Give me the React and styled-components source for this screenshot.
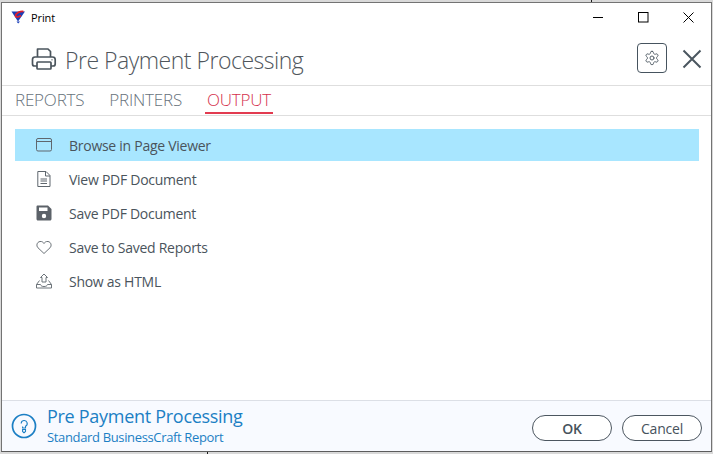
import React from "react";
import styled, { createGlobalStyle } from "styled-components";

const Global = createGlobalStyle`
  html, body { margin: 0; padding: 0; background: #d9d9d9; }
  body { font-family: "Open Sans", "Noto Sans", sans-serif; }
`;

const Page = styled.div`
  width: 713px;
  height: 454px;
  box-sizing: border-box;
  padding: 2px 1px;
  background:
    linear-gradient(#1a1a1a, #1a1a1a) 591px 0 / 1px 2px no-repeat,
    linear-gradient(#1a1a1a, #1a1a1a) 207px 452px / 1px 2px no-repeat,
    #d9d9d9;
  overflow: hidden;
`;

const Window = styled.div`
  height: 100%;
  box-sizing: border-box;
  display: flex;
  flex-direction: column;
  background: #fff;
  border: 1px solid #737373;
  border-bottom-color: #5c5c5c;
`;

const TitleBar = styled.div`
  height: 29px;
  display: flex;
  align-items: center;
  padding-left: 9px;
  flex: none;
`;

const TitleText = styled.span`
  font-size: 11px;
  color: #000;
  margin-left: 5px;
  flex: 1;
  letter-spacing: -0.1px;
`;

const WinButton = styled.button`
  width: 45px;
  height: 29px;
  border: 0;
  padding: 0;
  background: none;
  display: flex;
  align-items: center;
  justify-content: center;
`;

const Header = styled.header`
  height: 53px;
  flex: none;
  display: flex;
  align-items: center;
  padding: 0 9px 0 29px;
  border-bottom: 1px solid #dedede;
`;

const Heading = styled.h1`
  flex: 1;
  margin: 0 0 0 8px;
  font-size: 23px;
  font-weight: 300;
  color: #4f565c;
  letter-spacing: -0.49px;
  position: relative;
  top: 1px;
`;

const SettingsButton = styled.button`
  width: 30px;
  height: 30px;
  padding: 0;
  margin: 0 15px 2px 0;
  box-sizing: border-box;
  border: 1px solid #46545f;
  border-radius: 4px;
  background: #fff;
  display: flex;
  align-items: center;
  justify-content: center;
`;

const CloseButton = styled.button`
  width: 20px;
  height: 20px;
  border: 0;
  padding: 0;
  background: none;
  display: flex;
  align-items: center;
  justify-content: center;
`;

const Tabs = styled.nav`
  height: 29px;
  flex: none;
  display: flex;
  gap: 21px;
  padding-left: 11px;
  border-bottom: 1px solid #dedede;
`;

const Tab = styled.div`
  height: 28px;
  box-sizing: border-box;
  padding: 3px 2px 0;
  font-size: 17px;
  font-weight: 300;
  letter-spacing: -0.2px;
  line-height: 22px;
  color: ${(p) => (p.$active ? "#d5304c" : "#67727b")};
  border-bottom: ${(p) => (p.$active ? "2px solid #e23b50" : "2px solid transparent")};
`;

const List = styled.ul`
  flex: 1;
  margin: 0;
  padding: 13px 12px 0 13px;
  list-style: none;
  display: flex;
  flex-direction: column;
  gap: 2px;
`;

const Row = styled.li`
  height: 32px;
  display: flex;
  align-items: center;
  background: ${(p) => (p.$selected ? "#a8e6ff" : "transparent")};
  font-size: 14px;
  letter-spacing: -0.27px;
  color: #4a545c;
`;

const RowIcon = styled.span`
  width: 54px;
  padding-left: 21px;
  box-sizing: border-box;
  display: flex;
  align-items: center;
  flex: none;
`;

const Footer = styled.footer`
  height: 50px;
  flex: none;
  display: flex;
  align-items: center;
  padding: 0 9px;
  background: #f8faff;
  border-top: 1px solid #dcdfe6;
`;

const HelpIcon = styled.span`
  width: 26px;
  height: 26px;
  display: flex;
  margin-right: 10px;
  flex: none;
`;

const FooterText = styled.div`
  flex: 1;
  display: flex;
  flex-direction: column;
  gap: 2px;
  padding-bottom: 1px;
  color: #1c7fc4;
`;

const FooterTitle = styled.div`
  font-size: 18px;
  line-height: 22px;
  letter-spacing: -0.29px;
`;

const FooterSub = styled.div`
  font-size: 13px;
  line-height: 17px;
  letter-spacing: -0.35px;
`;

const DialogButton = styled.button`
  width: 80px;
  height: 26px;
  margin-left: 10px;
  box-sizing: border-box;
  border: 1px solid #4c5660;
  border-radius: 13px;
  background: #fff;
  color: #46525c;
  font-family: inherit;
  font-size: 14px;
  font-weight: ${(p) => (p.$primary ? 600 : 400)};
  letter-spacing: -0.2px;
  padding: 0;
  position: relative;
  top: 2px;
`;

const Logo = () => (
  <svg width="15" height="15" viewBox="0 0 15 15">
    <path d="M0.5 1.5H14L7 11.5Z" fill="#1a3fb8" />
    <path d="M5.5 11.5H9L7.2 13.5Z" fill="#1a3fb8" />
    <path d="M12.5 1.5C9 1 5 3 4.5 5.5C4.2 7.5 7 7.5 10 5.5" fill="none" stroke="#e0202c" strokeWidth="1.7" />
  </svg>
);

const PrinterIcon = () => (
  <svg width="26" height="26" viewBox="0 0 26 26" fill="none" stroke="#4a545c" strokeWidth="1.7" strokeLinejoin="round">
    <path d="M6.5 11V3H17L19.5 5.5V11" />
    <path d="M6 20H3.5C2.3 20 1.5 19.2 1.5 18V13.5C1.5 12 2.5 11 4 11H21.5C23 11 24.2 12 24.2 13.5V18C24.2 19.2 23.4 20 22.2 20H20" />
    <rect x="6" y="16" width="14" height="7" rx="0.8" />
    <path d="M21 13.6V14.2" />
  </svg>
);

const GearIcon = () => (
  <svg width="16" height="16" viewBox="0 0 24 24" fill="none" stroke="#56616a" strokeWidth="1.5" strokeLinecap="round" strokeLinejoin="round">
    <path d="M12.22 2h-.44a2 2 0 0 0-2 2v.18a2 2 0 0 1-1 1.73l-.43.25a2 2 0 0 1-2 0l-.15-.08a2 2 0 0 0-2.73.73l-.22.38a2 2 0 0 0 .73 2.73l.15.1a2 2 0 0 1 1 1.72v.51a2 2 0 0 1-1 1.74l-.15.09a2 2 0 0 0-.73 2.73l.22.38a2 2 0 0 0 2.73.73l.15-.08a2 2 0 0 1 2 0l.43.25a2 2 0 0 1 1 1.73V20a2 2 0 0 0 2 2h.44a2 2 0 0 0 2-2v-.18a2 2 0 0 1 1-1.73l.43-.25a2 2 0 0 1 2 0l.15.08a2 2 0 0 0 2.73-.73l.22-.39a2 2 0 0 0-.73-2.73l-.15-.08a2 2 0 0 1-1-1.74v-.5a2 2 0 0 1 1-1.74l.15-.09a2 2 0 0 0 .73-2.73l-.22-.38a2 2 0 0 0-2.73-.73l-.15.08a2 2 0 0 1-2 0l-.43-.25a2 2 0 0 1-1-1.73V4a2 2 0 0 0-2-2z" />
    <circle cx="12" cy="12" r="3" />
  </svg>
);

const BigClose = () => (
  <svg width="20" height="20" viewBox="0 0 20 20" stroke="#4a565f" strokeWidth="2" fill="none">
    <path d="M1.5 1.5L18.5 18.5M18.5 1.5L1.5 18.5" />
  </svg>
);

const BrowseIcon = () => (
  <svg width="16" height="14" viewBox="0 0 16 14" fill="none" stroke="#5f676e" strokeWidth="1">
    <rect x="0.5" y="0.5" width="15" height="12.5" rx="1.5" />
    <path d="M0.5 3.5H15.5" />
  </svg>
);

const DocIcon = () => (
  <svg width="16" height="16" viewBox="0 0 16 16" fill="none" stroke="#5f676e" strokeWidth="1">
    <path d="M1.8 0.5H10L14 4.5V15.5H1.8Z" strokeLinejoin="round" />
    <path d="M9.5 0.5V5H14M4.5 8H11M4.5 10H11M4.5 12.5H11" />
  </svg>
);

const SaveIcon = () => (
  <svg width="16" height="16" viewBox="0 0 16 16">
    <path fillRule="evenodd" fill="#5c6269" d="M1.5 0.5H12L15.5 4V14C15.5 14.9 14.9 15.5 14 15.5H2C1 15.5 0.5 14.9 0.5 14V1.5C0.5 1 1 0.5 1.5 0.5ZM3 2.5V6H11.5V2.5ZM8 8.8A2.2 2.2 0 1 0 8 13.2A2.2 2.2 0 1 0 8 8.8Z" />
  </svg>
);

const HeartIcon = () => (
  <svg width="16" height="15" viewBox="0 0 16 15" fill="none" stroke="#6d747a" strokeWidth="1">
    <path d="M8 13.5L2 7.8C0 5.8 0.8 2 4 1.5C6 1.2 7.3 2.3 8 3.5C8.7 2.3 10 1.2 12 1.5C15.2 2 16 5.8 14 7.8Z" strokeLinejoin="round" />
  </svg>
);

const UploadIcon = () => (
  <svg width="16" height="16" viewBox="0 0 16 16" fill="none" stroke="#6d747a" strokeWidth="1">
    <path d="M8 1L4.5 4.5H6V9H10V4.5H11.5Z" strokeLinejoin="round" />
    <path d="M3.5 7.5L0.5 11.5V15H15.5V11.5L12.5 7.5M0.5 11.5H4.5C5 13 6 13.5 8 13.5C10 13.5 11 13 11.5 11.5H15.5" strokeLinejoin="round" />
  </svg>
);

const HelpGlyph = () => (
  <svg width="26" height="26" viewBox="0 0 26 26" fill="none" stroke="#1c7fc4">
    <circle cx="13" cy="13" r="11.5" strokeWidth="1.7" />
    <path d="M10.2 10.5A3 3 0 1 1 14.5 13.2V15H11.6V13.4" strokeWidth="1.1" />
    <path d="M11.6 16.5H14.5V18.5L13 19.8L11.6 18.5Z" strokeWidth="1.1" />
  </svg>
);

const items = [
  ["Browse in Page Viewer", <BrowseIcon />, true],
  ["View PDF Document", <DocIcon />],
  ["Save PDF Document", <SaveIcon />],
  ["Save to Saved Reports", <HeartIcon />],
  ["Show as HTML", <UploadIcon />],
];

export default function App() {
  return (
    <Page>
      <Global />
      <Window>
        <TitleBar>
          <Logo />
          <TitleText>Print</TitleText>
          <WinButton aria-label="Minimize">
            <svg width="11" height="11" viewBox="0 0 11 11" stroke="#000" fill="none"><path d="M0 5.5H10" /></svg>
          </WinButton>
          <WinButton aria-label="Maximize">
            <svg width="11" height="11" viewBox="0 0 11 11" stroke="#000" fill="none"><rect x="0.5" y="0.5" width="9.5" height="9.5" /></svg>
          </WinButton>
          <WinButton aria-label="Close">
            <svg width="11" height="11" viewBox="0 0 11 11" stroke="#000" fill="none"><path d="M0.5 0.5L10.5 10.5M10.5 0.5L0.5 10.5" /></svg>
          </WinButton>
        </TitleBar>
        <Header>
          <PrinterIcon />
          <Heading>Pre Payment Processing</Heading>
          <SettingsButton aria-label="Settings"><GearIcon /></SettingsButton>
          <CloseButton aria-label="Close dialog"><BigClose /></CloseButton>
        </Header>
        <Tabs>
          <Tab>REPORTS</Tab>
          <Tab>PRINTERS</Tab>
          <Tab $active>OUTPUT</Tab>
        </Tabs>
        <List>
          {items.map(([label, icon, selected]) => (
            <Row key={label} $selected={selected}>
              <RowIcon>{icon}</RowIcon>
              {label}
            </Row>
          ))}
        </List>
        <Footer>
          <HelpIcon><HelpGlyph /></HelpIcon>
          <FooterText>
            <FooterTitle>Pre Payment Processing</FooterTitle>
            <FooterSub>Standard BusinessCraft Report</FooterSub>
          </FooterText>
          <DialogButton $primary>OK</DialogButton>
          <DialogButton>Cancel</DialogButton>
        </Footer>
      </Window>
    </Page>
  );
}
